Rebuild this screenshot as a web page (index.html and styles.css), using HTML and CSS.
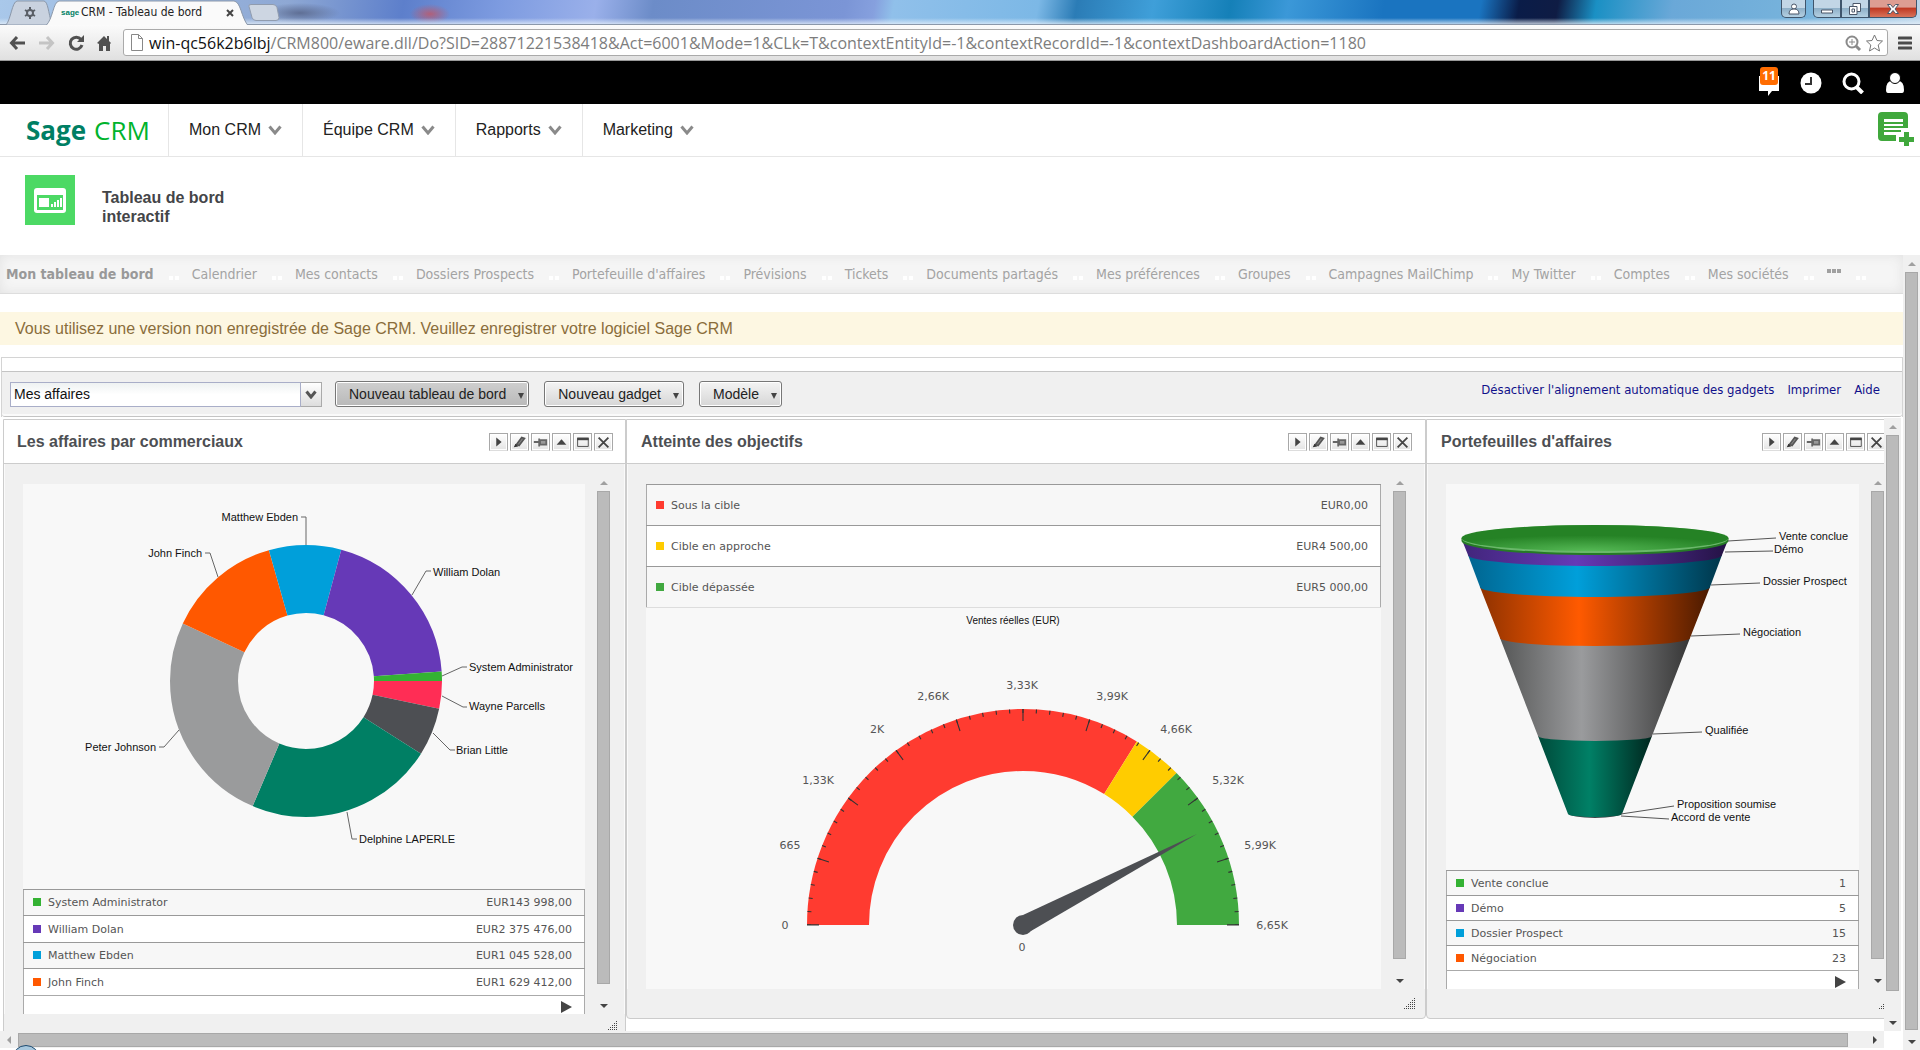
FILE: index.html
```html
<!DOCTYPE html>
<html lang="fr">
<head>
<meta charset="utf-8">
<title>CRM - Tableau de bord</title>
<link rel="stylesheet" href="styles.css">
</head>
<body>
<svg class="defs" width="0" height="0" aria-hidden="true">
  <defs>
    <symbol id="i-chevron" viewBox="0 0 14 10"><path d="M1.500 1.500 7 8 12.500 1.500" fill="none" stroke="#8a8a8a" stroke-width="3"/></symbol>
    <symbol id="i-play" viewBox="0 0 19 18"><path d="M7 4v10l6-5z" fill="#444"/></symbol>
    <symbol id="i-edit" viewBox="0 0 19 18"><path d="M6 12 12 4l3 1-6 8z" fill="#888" stroke="#555" stroke-width="2"/><path d="M3 15l2-4 3 3z" fill="#333"/></symbol>
    <symbol id="i-pin" viewBox="0 0 19 18"><path d="M2 9h6M8 5v9M9 7h7v5H9z" fill="#999" stroke="#666" stroke-width="2"/></symbol>
    <symbol id="i-up" viewBox="0 0 19 18"><path d="M4 12l5.500-6 5.500 6z" fill="#444"/></symbol>
    <symbol id="i-max" viewBox="0 0 19 18"><path d="M4 5h12v9H4z" fill="none" stroke="#444"/><path d="M3.500 5.500h13" stroke="#444" stroke-width="3"/></symbol>
    <symbol id="i-close" viewBox="0 0 19 18"><path d="M4 4l11 11M15 4L4 15" stroke="#444" stroke-width="2"/></symbol>
    <symbol id="i-grip" viewBox="0 0 12 12"><path d="M0 11h12M2 9h10M4 7h8M6 5h6M8 3h4M10 1h2" transform="translate(0 .5)" stroke="#444" stroke-width="1" stroke-dasharray="1 1"/></symbol>
  </defs>
</svg>

<header class="browser">
  <div class="tabstrip">
    <svg class="tabshapes" width="290" height="25" viewBox="0 0 290 25" aria-hidden="true">
      <path d="M6 25C11 19 12 2 17 1h27c4 1 4 10 8 24z" fill="#c9d2df" stroke="#8b98aa"/>
      <path d="M46 25.500C53 19 53 2 59 1h175c7 1 7 16 14 24.500z" fill="#fafafa" stroke="#8b98aa"/>
      <path d="M249 6.500q-1-2 2-2h22q3 0 4 3l2 10q0 3-3 3h-20q-3 0-4-3z" fill="#cdd6e2" stroke="#909caf"/>
      <g stroke="#5a5f66" fill="none"><circle cx="30" cy="13" r="3" stroke-width="2"/><path d="M30 7v3M30 16v3M25 10l2.500 1.500M35 10l-2.500 1.500M25 16l2.500-1.500M35 16l-2.500-1.500" stroke-width="2"/></g>
      <path d="M227 10l6 6M233 10l-6 6" stroke="#444" stroke-width="2"/>
    </svg>
    <span class="favicon">sage</span>
    <span class="tabtitle">CRM - Tableau de bord</span>
    <div class="winbtns">
      <button class="wb user" aria-label="Profil"><svg width="12" height="12" viewBox="0 0 12 12"><circle cx="6" cy="3.500" r="2.500"/><path d="M1 11q0-5 5-5t5 5z"/></svg></button>
      <span class="wgroup">
        <button class="wb min" aria-label="Réduire"><svg width="12" height="12" viewBox="0 0 12 12"><path d="M.5 7h11v3H.5z"/></svg></button><button class="wb max" aria-label="Restaurer"><svg width="12" height="12" viewBox="0 0 12 12"><path d="M4 .5h7.500v8H4z"/><path d="M.5 3.500H8v8H.5z"/><path d="M3 6h2.500v3H3z"/></svg></button><button class="wb close" aria-label="Fermer"><svg width="12" height="12" viewBox="0 0 12 12"><path d="M.5 1.500h3L6 4.500l2.500-3h3L8 6l3.500 4.500h-3L6 7.500l-2.500 3h-3L4 6z"/></svg></button>
      </span>
    </div>
  </div>
  <div class="addressbar">
    <svg class="navicons" width="104" height="18" viewBox="0 0 104 18" aria-hidden="true">
      <path d="M16 9H3M8 3L2.500 9 8 15" fill="none" stroke="#505050" stroke-width="3"/>
      <path d="M30 9h13M38 3l5.500 6-5.500 6" fill="none" stroke="#c4c4c4" stroke-width="3"/>
      <path d="M72 5.500A6 6 0 1 0 73 11" fill="none" stroke="#505050" stroke-width="3"/><path d="M75 1v7h-7z" fill="#505050"/>
      <path d="M88 9l7-7 3 3V2h2v5l2 2-1 1v7h-4v-5h-3v5h-4v-7z" fill="#505050"/>
    </svg>
    <label class="urlbox">
      <svg width="12" height="17" viewBox="0 0 12 17" aria-hidden="true"><path d="M.5.5h7l4 4v12H.5zM7.500.5v4h4" fill="#fff" stroke="#888"/></svg>
      <span class="url"><b>win-qc56k2b6lbj</b>/CRM800/eware.dll/Do?SID=28871221538418&amp;Act=6001&amp;Mode=1&amp;CLk=T&amp;contextEntityId=-1&amp;contextRecordId=-1&amp;contextDashboardAction=1180</span>
      <svg width="38" height="18" viewBox="0 0 38 18" aria-hidden="true"><g fill="none" stroke="#8a8a8a"><circle cx="7" cy="8" r="5.500" stroke-width="2"/><path d="M4 8h6M7 5v6"/><path d="M11 12l4 4" stroke-width="3"/><path d="M29.500 1l2.500 5.500 5.500.5-4.300 4 1.300 6-5-3-5 3 1.300-6-4.300-4 5.500-.5z" stroke="#777"/></g></svg>
    </label>
    <svg class="burger" width="14" height="14" viewBox="0 0 14 14" aria-hidden="true"><path d="M1 2h12M1 7h12M1 12h12" stroke="#4a4a4a" stroke-width="3" stroke-linecap="round"/></svg>
  </div>
</header>

<div class="topbar">
  <button class="tb notif" aria-label="Notifications"><svg width="22" height="26" viewBox="0 0 22 26"><path d="M1 6h20v15h-7l-4 5v-5H1z" fill="#fff"/></svg><span class="badge">11</span></button>
  <button class="tb" aria-label="Récents"><svg width="22" height="22" viewBox="0 0 22 22"><circle cx="11" cy="11" r="10.500" fill="#fff"/><path d="M11 5v7H5" fill="none" stroke="#333" stroke-width="2"/></svg></button>
  <button class="tb" aria-label="Rechercher"><svg width="22" height="22" viewBox="0 0 22 22"><circle cx="9.500" cy="9.500" r="7.500" fill="none" stroke="#fff" stroke-width="3"/><path d="M14.500 15l6 6" stroke="#fff" stroke-width="4"/></svg></button>
  <button class="tb" aria-label="Utilisateur"><svg width="22" height="22" viewBox="0 0 22 22"><path d="M2 18q0-9 6-9h6q6 0 6 9 0 3-2 3H4q-2 0-2-3z" fill="#fff"/><circle cx="11" cy="6" r="5.500" fill="#fff" stroke="#000"/></svg></button>
</div>

<nav class="mainnav">
  <a class="logo" href="#"><b>Sage</b> CRM</a>
  <a href="#">Mon CRM<svg width="14" height="10"><use href="#i-chevron"/></svg></a>
  <a href="#">Équipe CRM<svg width="14" height="10"><use href="#i-chevron"/></svg></a>
  <a href="#">Rapports<svg width="14" height="10"><use href="#i-chevron"/></svg></a>
  <a href="#">Marketing<svg width="14" height="10"><use href="#i-chevron"/></svg></a>
  <button class="newitem" aria-label="Nouveau"><svg width="36" height="34" viewBox="0 0 36 34"><path d="M4 0h22q4 0 4 4v12h-5V7H6v16h12v6H4q-4 0-4-4V4q0-4 4-4z" fill="#40a83c"/><path d="M6 7h19v16H6z" fill="#fff"/><path d="M6 11h19M6 15h19M6 19h17" stroke="#40a83c" stroke-width="2"/><path d="M26 20h5v5h5v5h-5v4h-5v-4h-5v-5h5z" fill="#40a83c"/></svg></button>
</nav>

<section class="pagehead">
  <svg width="50" height="50" viewBox="0 0 50 50" aria-hidden="true"><path d="M0 0h50v50H0z" fill="#4cd964"/><rect x="9" y="13" width="32" height="25" rx="3" fill="#fff"/><path d="M12 20h26v15H12z" fill="#4cd964"/><path d="M14 23h10v9H14zM26 29h2v3h-2zM29 27h2v5h-2zM32 25h2v7h-2zM35 23h2v9h-2z" fill="#fff"/></svg>
  <h1>Tableau de bord interactif</h1>
</section>

<div class="page">
  <main class="content">
    <nav class="tabs">
      <a class="on" href="#">Mon tableau de bord</a><a href="#">Calendrier</a><a href="#">Mes contacts</a><a href="#">Dossiers Prospects</a><a href="#">Portefeuille d'affaires</a><a href="#">Prévisions</a><a href="#">Tickets</a><a href="#">Documents partagés</a><a href="#">Mes préférences</a><a href="#">Groupes</a><a href="#">Campagnes MailChimp</a><a href="#">My Twitter</a><a href="#">Comptes</a><a href="#">Mes sociétés</a><a class="more" href="#" aria-label="Plus"><svg width="14" height="4" viewBox="0 0 14 4"><path d="M0 0h4v4H0zM5 0h4v4H5zM10 0h4v4h-4z" fill="#a0a0a0"/></svg></a>
    </nav>
    <p class="banner">Vous utilisez une version non enregistrée de Sage CRM. Veuillez enregistrer votre logiciel Sage CRM</p>
    <div class="toolbox">
      <div class="toolbar">
        <label class="combo"><select aria-label="Tableau de bord"><option>Mes affaires</option></select><span class="comboarrow"><svg width="12" height="9" viewBox="0 0 12 9"><path d="M1.500 1.500 6 7l4.500-5.500" fill="none" stroke="#555" stroke-width="3"/></svg></span></label>
        <button class="btn pressed">Nouveau tableau de bord<i></i></button>
        <button class="btn">Nouveau gadget<i></i></button>
        <button class="btn">Modèle<i></i></button>
        <div class="links"><a href="#">Désactiver l'alignement automatique des gadgets</a><a href="#">Imprimer</a><a href="#">Aide</a></div>
      </div>
    </div>

    <div class="workspace">
      <div class="viewport">
        <section class="panel tall">
          <header><h2>Les affaires par commerciaux</h2><div class="tools">
            <button aria-label="Lancer"><svg><use href="#i-play"/></svg></button><button aria-label="Modifier"><svg><use href="#i-edit"/></svg></button><button aria-label="Épingler"><svg><use href="#i-pin"/></svg></button><button aria-label="Replier"><svg><use href="#i-up"/></svg></button><button aria-label="Agrandir"><svg><use href="#i-max"/></svg></button><button aria-label="Fermer"><svg><use href="#i-close"/></svg></button></div></header>
          <div class="body">
            <div class="gadget">
              <svg class="chart donut" viewBox="-283 -197 562 405" role="img" aria-label="Affaires par commercial">
                <g fill="none" stroke-width="68">
                  <circle r="102" pathLength="360" stroke="#ff2d55" stroke-dasharray="11.8 360"/>
                  <circle r="102" pathLength="360" stroke="#4d4f53" stroke-dasharray="20.5 360" stroke-dashoffset="-11.8"/>
                  <circle r="102" pathLength="360" stroke="#007f64" stroke-dasharray="80.800 360" stroke-dashoffset="-32.300"/>
                  <circle r="102" pathLength="360" stroke="#9a9b9c" stroke-dasharray="92 360" stroke-dashoffset="-113.100"/>
                  <circle r="102" pathLength="360" stroke="#ff5800" stroke-dasharray="49 360" stroke-dashoffset="-205.100"/>
                  <circle r="102" pathLength="360" stroke="#009fda" stroke-dasharray="31 360" stroke-dashoffset="-254.100"/>
                  <circle r="102" pathLength="360" stroke="#6639b7" stroke-dasharray="70.800 360" stroke-dashoffset="-285.100"/>
                  <circle r="102" pathLength="360" stroke="#34b233" stroke-dasharray="4.100 360" stroke-dashoffset="-355.900"/>
                </g>
                <path d="M0-136v-28h-5M-88-104l-8-24h-5M106-86l14-24h5M136-5l20-9h5M136 15l21 11h4M127 52l17 17h5M41 131l5 27h5M-127 49l-15 17h-5" fill="none" stroke="#666"/>
                <g class="lbl">
                  <text x="-8" y="-160" class="end">Matthew Ebden</text><text x="-104" y="-124" class="end">John Finch</text>
                  <text x="127" y="-105">William Dolan</text><text x="163" y="-10">System Administrator</text>
                  <text x="163" y="29">Wayne Parcells</text><text x="150" y="73">Brian Little</text>
                  <text x="53" y="162">Delphine LAPERLE</text><text x="-150" y="70" class="end">Peter Johnson</text>
                </g>
              </svg>
              <table class="legend r26">
                <tr><th scope="row"><i class="sw green"></i>System Administrator</th><td>EUR143 998,00</td></tr>
                <tr><th scope="row"><i class="sw purple"></i>William Dolan</th><td>EUR2 375 476,00</td></tr>
                <tr><th scope="row"><i class="sw blue"></i>Matthew Ebden</th><td>EUR1 045 528,00</td></tr>
                <tr><th scope="row"><i class="sw orange"></i>John Finch</th><td>EUR1 629 412,00</td></tr>
              </table>
              <div class="pager"><button aria-label="Suite"><svg width="11" height="12" viewBox="0 0 11 12"><path d="M0 0l11 6-11 6z" fill="#444"/></svg></button></div>
            </div>
            <div class="vscroll"><i class="up"></i><i class="thumb"></i><i class="down"></i></div>
          </div>
          <svg class="grip" width="12" height="12"><use href="#i-grip"/></svg>
        </section>

        <section class="panel mid">
          <header><h2>Atteinte des objectifs</h2><div class="tools">
            <button aria-label="Lancer"><svg><use href="#i-play"/></svg></button><button aria-label="Modifier"><svg><use href="#i-edit"/></svg></button><button aria-label="Épingler"><svg><use href="#i-pin"/></svg></button><button aria-label="Replier"><svg><use href="#i-up"/></svg></button><button aria-label="Agrandir"><svg><use href="#i-max"/></svg></button><button aria-label="Fermer"><svg><use href="#i-close"/></svg></button></div></header>
          <div class="body">
            <div class="gadget">
              <table class="legend r41">
                <tr><th scope="row"><i class="sw red"></i>Sous la cible</th><td>EUR0,00</td></tr>
                <tr><th scope="row"><i class="sw yellow"></i>Cible en approche</th><td>EUR4 500,00</td></tr>
                <tr><th scope="row"><i class="sw green2"></i>Cible dépassée</th><td>EUR5 000,00</td></tr>
              </table>
              <svg class="chart gauge" viewBox="-377 -317 735 382" role="img" aria-label="Ventes réelles">
                <g fill="none" stroke-width="62">
                  <path d="M-185 0A185 185 0 0 1 185 0" pathLength="180" stroke="#ff3b30" stroke-dasharray="121.800 200"/>
                  <path d="M-185 0A185 185 0 0 1 185 0" pathLength="180" stroke="#ffcc00" stroke-dasharray="13.500 200" stroke-dashoffset="-121.800"/>
                  <path d="M-185 0A185 185 0 0 1 185 0" pathLength="180" stroke="#41a940" stroke-dasharray="45 200" stroke-dashoffset="-135.300"/>
                </g>
                <path d="M-214 0A214 214 0 0 1 214 0" pathLength="180" fill="none" stroke="#333" stroke-width="4" stroke-dasharray=".3 3.300" stroke-dashoffset=".15"/>
                <path d="M-210 0A210 210 0 0 1 210 0" pathLength="180" fill="none" stroke="#333" stroke-width="12" stroke-dasharray=".3 17.700" stroke-dashoffset=".15"/>
                <path d="M-216 0h12M204 0h12" stroke="#333"/>
                <path d="M0-10 174-91 8 6z" fill="#4d4f53"/><circle r="10" fill="#4d4f53"/>
                <text x="-10" y="-301" class="lbl mid10">Ventes réelles (EUR)</text>
                <g class="scale">
                  <text x="-238" y="4">0</text><text x="-233" y="-76">665</text><text x="-205" y="-141">1,33K</text><text x="-146" y="-192">2K</text><text x="-90" y="-225">2,66K</text><text x="-1" y="-236">3,33K</text><text x="89" y="-225">3,99K</text><text x="153" y="-192">4,66K</text><text x="205" y="-141">5,32K</text><text x="237" y="-76">5,99K</text><text x="249" y="4">6,65K</text><text x="-1" y="26">0</text>
                </g>
              </svg>
            </div>
            <div class="vscroll"><i class="up"></i><i class="thumb"></i><i class="down"></i></div>
          </div>
          <svg class="grip" width="12" height="12"><use href="#i-grip"/></svg>
        </section>

        <section class="panel last">
          <header><h2>Portefeuilles d'affaires</h2><div class="tools">
            <button aria-label="Lancer"><svg><use href="#i-play"/></svg></button><button aria-label="Modifier"><svg><use href="#i-edit"/></svg></button><button aria-label="Épingler"><svg><use href="#i-pin"/></svg></button><button aria-label="Replier"><svg><use href="#i-up"/></svg></button><button aria-label="Agrandir"><svg><use href="#i-max"/></svg></button><button aria-label="Fermer"><svg><use href="#i-close"/></svg></button></div></header>
          <div class="body">
            <div class="gadget">
              <svg class="chart funnel" viewBox="0 0 413 386" role="img" aria-label="Portefeuille d'affaires">
                <defs>
                  <linearGradient id="fp"><stop offset="0" stop-color="#41257a"/><stop offset=".43" stop-color="#6639b7"/><stop offset="1" stop-color="#241244"/></linearGradient>
                  <linearGradient id="fb"><stop offset="0" stop-color="#006590"/><stop offset=".43" stop-color="#009fda"/><stop offset="1" stop-color="#00364a"/></linearGradient>
                  <linearGradient id="fo"><stop offset="0" stop-color="#8f3200"/><stop offset=".43" stop-color="#ff5a00"/><stop offset="1" stop-color="#4a1a00"/></linearGradient>
                  <linearGradient id="fg"><stop offset="0" stop-color="#565757"/><stop offset=".43" stop-color="#9a9b9d"/><stop offset="1" stop-color="#363636"/></linearGradient>
                  <linearGradient id="ft"><stop offset="0" stop-color="#004a3a"/><stop offset=".45" stop-color="#008066"/><stop offset="1" stop-color="#00261e"/></linearGradient>
                  <radialGradient id="fl" cx=".47" cy="1" r=".6"><stop offset="0" stop-color="#55b955"/><stop offset="1" stop-color="#258225"/></radialGradient>
                </defs>
                <path d="M122 329a27 5 0 0 0 54 0z" fill="#3c4648"/>
                <path d="M92 252 122 330a27 3 0 0 0 54 0L206 252z" fill="url(#ft)"/>
                <path d="M54 154 92 252a57 5 0 0 0 114 0L244 154z" fill="url(#fg)"/>
                <path d="M34 103 54 154a95 8 0 0 0 190 0L264 103z" fill="url(#fo)"/>
                <path d="M22 71 34 103a115 10 0 0 0 230 0L276 71z" fill="url(#fb)"/>
                <path d="M16 56 22 71a127 11 0 0 0 254 0L282 56z" fill="url(#fp)"/>
                <path d="M15.500 54v3a133.500 14 0 0 0 267 0v-3z" fill="#267a26"/>
                <ellipse cx="149" cy="55" rx="133" ry="14" fill="#6ab86a"/>
                <ellipse cx="149" cy="54" rx="133.500" ry="13" fill="url(#fl)"/>
                <path d="M282 57l48-3M279 68l48-1M265 101l49-2M245 152l49-2M207 250l49-2M175 330l53-8M175 332l48 3" stroke="#555" fill="none"/>
                <g class="lbl"><text x="333" y="56">Vente conclue</text><text x="328" y="69">Démo</text><text x="317" y="101">Dossier Prospect</text><text x="297" y="152">Négociation</text><text x="259" y="250">Qualifiée</text><text x="231" y="324">Proposition soumise</text><text x="225" y="337">Accord de vente</text></g>
              </svg>
              <table class="legend r25">
                <tr><th scope="row"><i class="sw green"></i>Vente conclue</th><td>1</td></tr>
                <tr><th scope="row"><i class="sw purple"></i>Démo</th><td>5</td></tr>
                <tr><th scope="row"><i class="sw blue"></i>Dossier Prospect</th><td>15</td></tr>
                <tr><th scope="row"><i class="sw orange"></i>Négociation</th><td>23</td></tr>
              </table>
              <div class="pager"><button aria-label="Suite"><svg width="11" height="12" viewBox="0 0 11 12"><path d="M0 0l11 6-11 6z" fill="#444"/></svg></button></div>
            </div>
            <div class="vscroll"><i class="up"></i><i class="thumb"></i><i class="down"></i></div>
          </div>
          <svg class="grip" width="12" height="12"><use href="#i-grip"/></svg>
        </section>
      </div>
      <div class="vscroll inner"><i class="up"></i><i class="thumb"></i><i class="down"></i></div>
      <div class="hscroll"><i class="left"></i><i class="thumb"></i><i class="right"></i></div>
    </div>
  </main>
  <div class="vscroll outer"><i class="up"></i><i class="thumb"></i><i class="down"></i></div>
</div>
<span class="orb" aria-hidden="true"></span>
</body>
</html>
```
FILE: styles.css
```css
* { box-sizing: border-box; }
html, body { height: 100%; }
body {
  margin: 0; height: 100vh; overflow: hidden; position: relative;
  display: flex; flex-direction: column; background: #fff;
  font-family: "Liberation Sans", Arial, sans-serif; font-size: 14px; color: #222;
}
a { text-decoration: none; color: inherit; }
button { border: 0; padding: 0; background: none; font: inherit; color: inherit; }
svg { display: block; }
.defs { position: absolute; }

/* browser frame */
.browser { flex: none; }
.tabstrip {
  height: 25px; display: flex; position: relative; align-items: center; border-bottom: 1px solid #8b98aa;
  background:
    linear-gradient(180deg, transparent 75%, rgba(230, 240, 250, .75) 100%),
    radial-gradient(ellipse 20px 10px at 430px 14px, #b0607a, transparent),
    radial-gradient(ellipse 40px 10px at 300px 13px, #5f6f95, transparent),
    linear-gradient(100deg, #a9c8ea 0, #8ea8d4 15%, #5d7fcb 21%, #7d9be0 26%, #9ab0ea 31%, #6c8cc8 34%, #7b95d6 44%, #86a0de 45.500%, #90c0ea 46.500%, #7cb8e6 54%, #2b7cb6 56%, #3f9fd9 60%, #1580b8 64%, #3b98d8 67%, #1a74c0 72%, #1a74c0 77%, #0a1c48 79%, #0f1c44 81%, #1a90c4 83%, #6aa8d8 87%, #78b4dc 94%, #bdd6ea 100%);
}
.tabshapes { position: absolute; left: 0; top: 0; }
.favicon, .tabtitle { position: relative; }
.favicon { margin-left: 61px; width: 20px; font-size: 8px; font-weight: bold; color: #007f64; }
.tabtitle { font: 12px "DejaVu Sans Condensed", "Open Sans", sans-serif; color: #222; }
.winbtns { margin-left: auto; margin-right: 3px; align-self: flex-start; display: flex; gap: 7px; }
.wgroup { display: flex; }
.wb { height: 18px; width: 28px; display: grid; place-items: center; border: 1px solid #3f556c; border-top: 0; background: linear-gradient(#c2d6e6 45%, #8fb0c8 50%, #b4d0e2); }
.wb svg { fill: #fff; stroke: #4a5668; }
.wb.user { width: 25px; border-radius: 0 0 5px 5px; }
.wb.min { border-radius: 0 0 0 5px; }
.wb.close { width: 48px; border-radius: 0 0 5px 0; background: linear-gradient(#dd9d92 40%, #c03a24 50%, #d8735a); }
.addressbar {
  height: 36px; display: flex; align-items: center; padding: 0 8px 0 9px;
  background: linear-gradient(#fbfbfb, #e0e0e0); border-bottom: 1px solid #999;
}
.urlbox {
  flex: 1; min-width: 0; height: 27px; margin: 0 10px; padding: 0 4px 0 7px; display: flex; align-items: center; gap: 6px;
  background: #fff; border: 1px solid #aaa; border-radius: 3px;
}
.url { flex: 1; font: 16px "Open Sans", "Noto Sans", sans-serif; color: #7d7d7d; white-space: nowrap; }
.url b { font-weight: normal; color: #111; }

/* application header */
.topbar { flex: none; height: 43px; background: #000; display: flex; justify-content: flex-end; align-items: center; gap: 20px; padding-right: 14px; }
.tb { position: relative; display: grid; place-items: center; }
.badge {
  position: absolute; left: 2px; top: -3px; width: 18px; height: 18px; border-radius: 3px; background: #ff6c00;
  color: #fff; font: bold 12px/18px "Open Sans", sans-serif; text-align: center;
}
.mainnav { flex: none; height: 53px; display: flex; align-items: stretch; border-bottom: 1px solid #e6e6e6; font-size: 16px; }
.mainnav a { display: flex; align-items: center; gap: 7px; padding: 0 20px; border-right: 1px solid #e6e6e6; }
.mainnav a:last-of-type { border-right: 0; }
.mainnav .logo { width: 169px; padding: 0 0 0 26px; gap: 8px; font: 26px "Open Sans", sans-serif; color: #00b32c; }
.logo b { color: #007f64; }
.newitem { margin: 8px 6px 0 auto; align-self: flex-start; }
.pagehead { flex: none; height: 98px; display: flex; gap: 27px; padding: 18px 25px; }
.pagehead h1 { margin: 13px 0 0; width: 150px; font-size: 16px; line-height: 19px; color: #444548; }

/* scrolling area */
.page { flex: 1; min-height: 0; display: flex; }
.content { flex: 1; min-width: 0; display: flex; flex-direction: column; }
.tabs {
  flex: none; height: 39px; display: flex; align-items: center; padding: 0 6px; white-space: nowrap;
  background: #f5f5f5; border-bottom: 1px solid #ddd; box-shadow: inset 0 0 12px #e2e2e2;
  font: 14px "DejaVu Sans Condensed", "Open Sans", sans-serif; color: #a3a3a3;
}
.tabs a { display: flex; align-items: center; }
.tabs a::after { content: ""; width: 10px; height: 4px; margin: 8px 13px 0 15px; background: linear-gradient(90deg, #fff 4px, transparent 4px, transparent 6px, #fff 6px); }
.tabs .on { font-weight: bold; color: #999; }
.tabs .more svg { margin-bottom: 6px; }
.banner { flex: none; margin: 18px 0 12px; padding-left: 15px; height: 33px; line-height: 33px; font-size: 16px; background: #fdf7e2; color: #8a6d3b; }
.toolbox { flex: none; margin: 0 0 1px 1px; padding-top: 13px; border: 1px solid #d4d4d4; border-bottom: 0; }
.toolbar { height: 46px; display: flex; align-items: center; padding: 0 22px 0 8px; background: #f0f0f0; border-top: 1px solid #c4c4c4; border-bottom: 1px solid #c4c4c4; box-shadow: inset 0 -2px #fafafa; border-radius: 0 0 3px 3px; }
.combo { width: 312px; height: 25px; display: flex; margin-right: 13px; }
.combo select { appearance: none; flex: 1; border: 1px solid #a9aec8; padding: 0 3px; border-radius: 0; background: linear-gradient(#eef2f2, #fff 50%); font: 14px "Liberation Sans", Arial, sans-serif; color: #111; }
.comboarrow { width: 21px; display: grid; place-items: center; border: 1px solid #aaa; border-left: 0; background: linear-gradient(#fff, #ddd); }
.btn {
  height: 26px; margin-right: 15px; padding: 0 4px 0 13px; display: flex; align-items: center; gap: 12px;
  border: 1px solid #777; border-radius: 3px; background: linear-gradient(#f4f4f4, #d6d6d6); box-shadow: inset 0 0 0 1px #fff; color: #222;
}
.btn.pressed { background: linear-gradient(#cfcfcf, #b9b9b9); }
.btn i { border: 3px solid transparent; border-top: 6px solid #444; border-bottom: 0; margin-top: 3px; }
.links { margin-left: auto; display: flex; gap: 13px; font: 13px "DejaVu Sans Condensed", "Open Sans", sans-serif; color: #10108a; padding-bottom: 9px; white-space: nowrap; }

.workspace { flex: 1; min-height: 0; display: grid; grid-template: minmax(0, 1fr) 17px / minmax(0, 1fr) 17px; padding: 0 2px 2px 0; }
.viewport { overflow: hidden; display: grid; grid-template-columns: 623fr 800fr 458fr; align-items: start; padding: 1px 0 0 3px; }

.panel { border: 1px solid #ccc; height: 600px; display: flex; flex-direction: column; background: #f0f0f0; border-radius: 0 0 4px 4px; min-width: 0; }
.panel.tall { height: 625px; }
.panel.last { margin-right: -17px; }
.panel header { flex: none; height: 44px; display: flex; align-items: center; padding: 0 13px 0 14px; background: #fff; border-bottom: 1px solid #ccc; }
.panel.tall header { padding: 0 12px 0 13px; }
.panel.last header { padding-right: 14px; }
.panel h2 { margin: 0; font-size: 16px; color: #4d4f53; }
.tools { margin-left: auto; display: flex; gap: 2px; }
.tools button { width: 19px; height: 18px; border: 1px solid #a8a8a8; border-bottom-color: #ddd; background: linear-gradient(#fff, #e4e4e4); box-shadow: inset 0 0 0 1px #fff; }
.tools svg { width: 17px; height: 16px; }
.body { display: flex; gap: 10px; height: 525px; padding: 10px 14px 0 19px; box-shadow: inset 1px 0 #fafafa, inset -1px 0 #fafafa; }
.tall .body { height: 550px; padding-right: 13px; }
.mid .body { padding-right: 17px; }
.gadget { flex: 1; min-width: 0; margin-top: 10px; height: 505px; overflow: hidden; background: #f8f8f8; }
.tall .gadget { height: 530px; }
.grip { flex: none; margin: 8px 9px 0 auto; }
.tall .grip { margin: 6px 7px 0 auto; }

.chart { width: 100%; }
.donut { height: 405px; }
.gauge { height: 382px; }
.funnel { height: 386px; }
.lbl { font-size: 11px; fill: #111; }
.mid10 { font-size: 10px; text-anchor: middle; }
.end { text-anchor: end; }
.scale { font: 11px "DejaVu Sans", sans-serif; fill: #555; text-anchor: middle; }

.legend { width: 100%; border-collapse: collapse; border: 1px solid #aaa; font: 11px "DejaVu Sans", sans-serif; color: #555; }
.legend tr { background: #f7f7f7; border-top: 1px solid #999; height: 25px; }
.legend tr:nth-child(even) { background: #fff; }
.legend th { font-weight: normal; text-align: left; padding: 0 0 0 9px; }
.legend td { text-align: right; padding: 0 12px 0 0; }
.r26 tr { height: 26px; }
.r26 tr:nth-child(even) { height: 27px; }
.r41 tr { height: 41px; }
.r41 { border-bottom-color: #ddd; }
.sw { display: inline-block; width: 8px; height: 8px; margin-right: 7px; }
.green { background: #34b233; }
.green2 { background: #41a940; }
.purple { background: #6639b7; }
.blue { background: #009fda; }
.orange { background: #ff5800; }
.red { background: #ff3b30; }
.yellow { background: #ffcc00; }
.pager { height: 30px; display: flex; justify-content: flex-end; align-items: flex-start; padding: 5px 12px 0; background: #fff; border: 1px solid #aaa; border-top: 0; }

/* scrollbars */
.vscroll { flex: none; width: 17px; display: flex; flex-direction: column; align-items: center; background: #f0f0f0; }
.thumb { flex: 1; width: 13px; background: #bbb; border: 1px solid #a8a8a8; margin-bottom: 13px; }
.up, .down { flex: none; height: 17px; width: 17px; display: grid; place-items: center; }
.up::before { content: ""; border: 4px solid transparent; border-top: 0; border-bottom: 4px solid #a0a0a0; }
.down::before { content: ""; border: 4px solid transparent; border-bottom: 0; border-top: 4px solid #444; }
.inner .thumb { margin-bottom: 23px; }
.outer .thumb { margin-bottom: 3px; }
.hscroll { height: 17px; display: flex; align-items: center; background: #f0f0f0; }
.hscroll .thumb { width: auto; height: 14px; margin: 0 18px 0 0; }
.left, .right { width: 18px; display: grid; place-items: center; }
.left::before { content: ""; border: 4px solid transparent; border-left: 0; border-right: 4px solid #a0a0a0; }
.right::before { content: ""; border: 4px solid transparent; border-right: 0; border-left: 4px solid #444; }
.orb { position: absolute; left: 12px; bottom: -23px; width: 28px; height: 28px; border-radius: 50%; border: 1px solid #1d4a70; background: #a8c8de; }
```
